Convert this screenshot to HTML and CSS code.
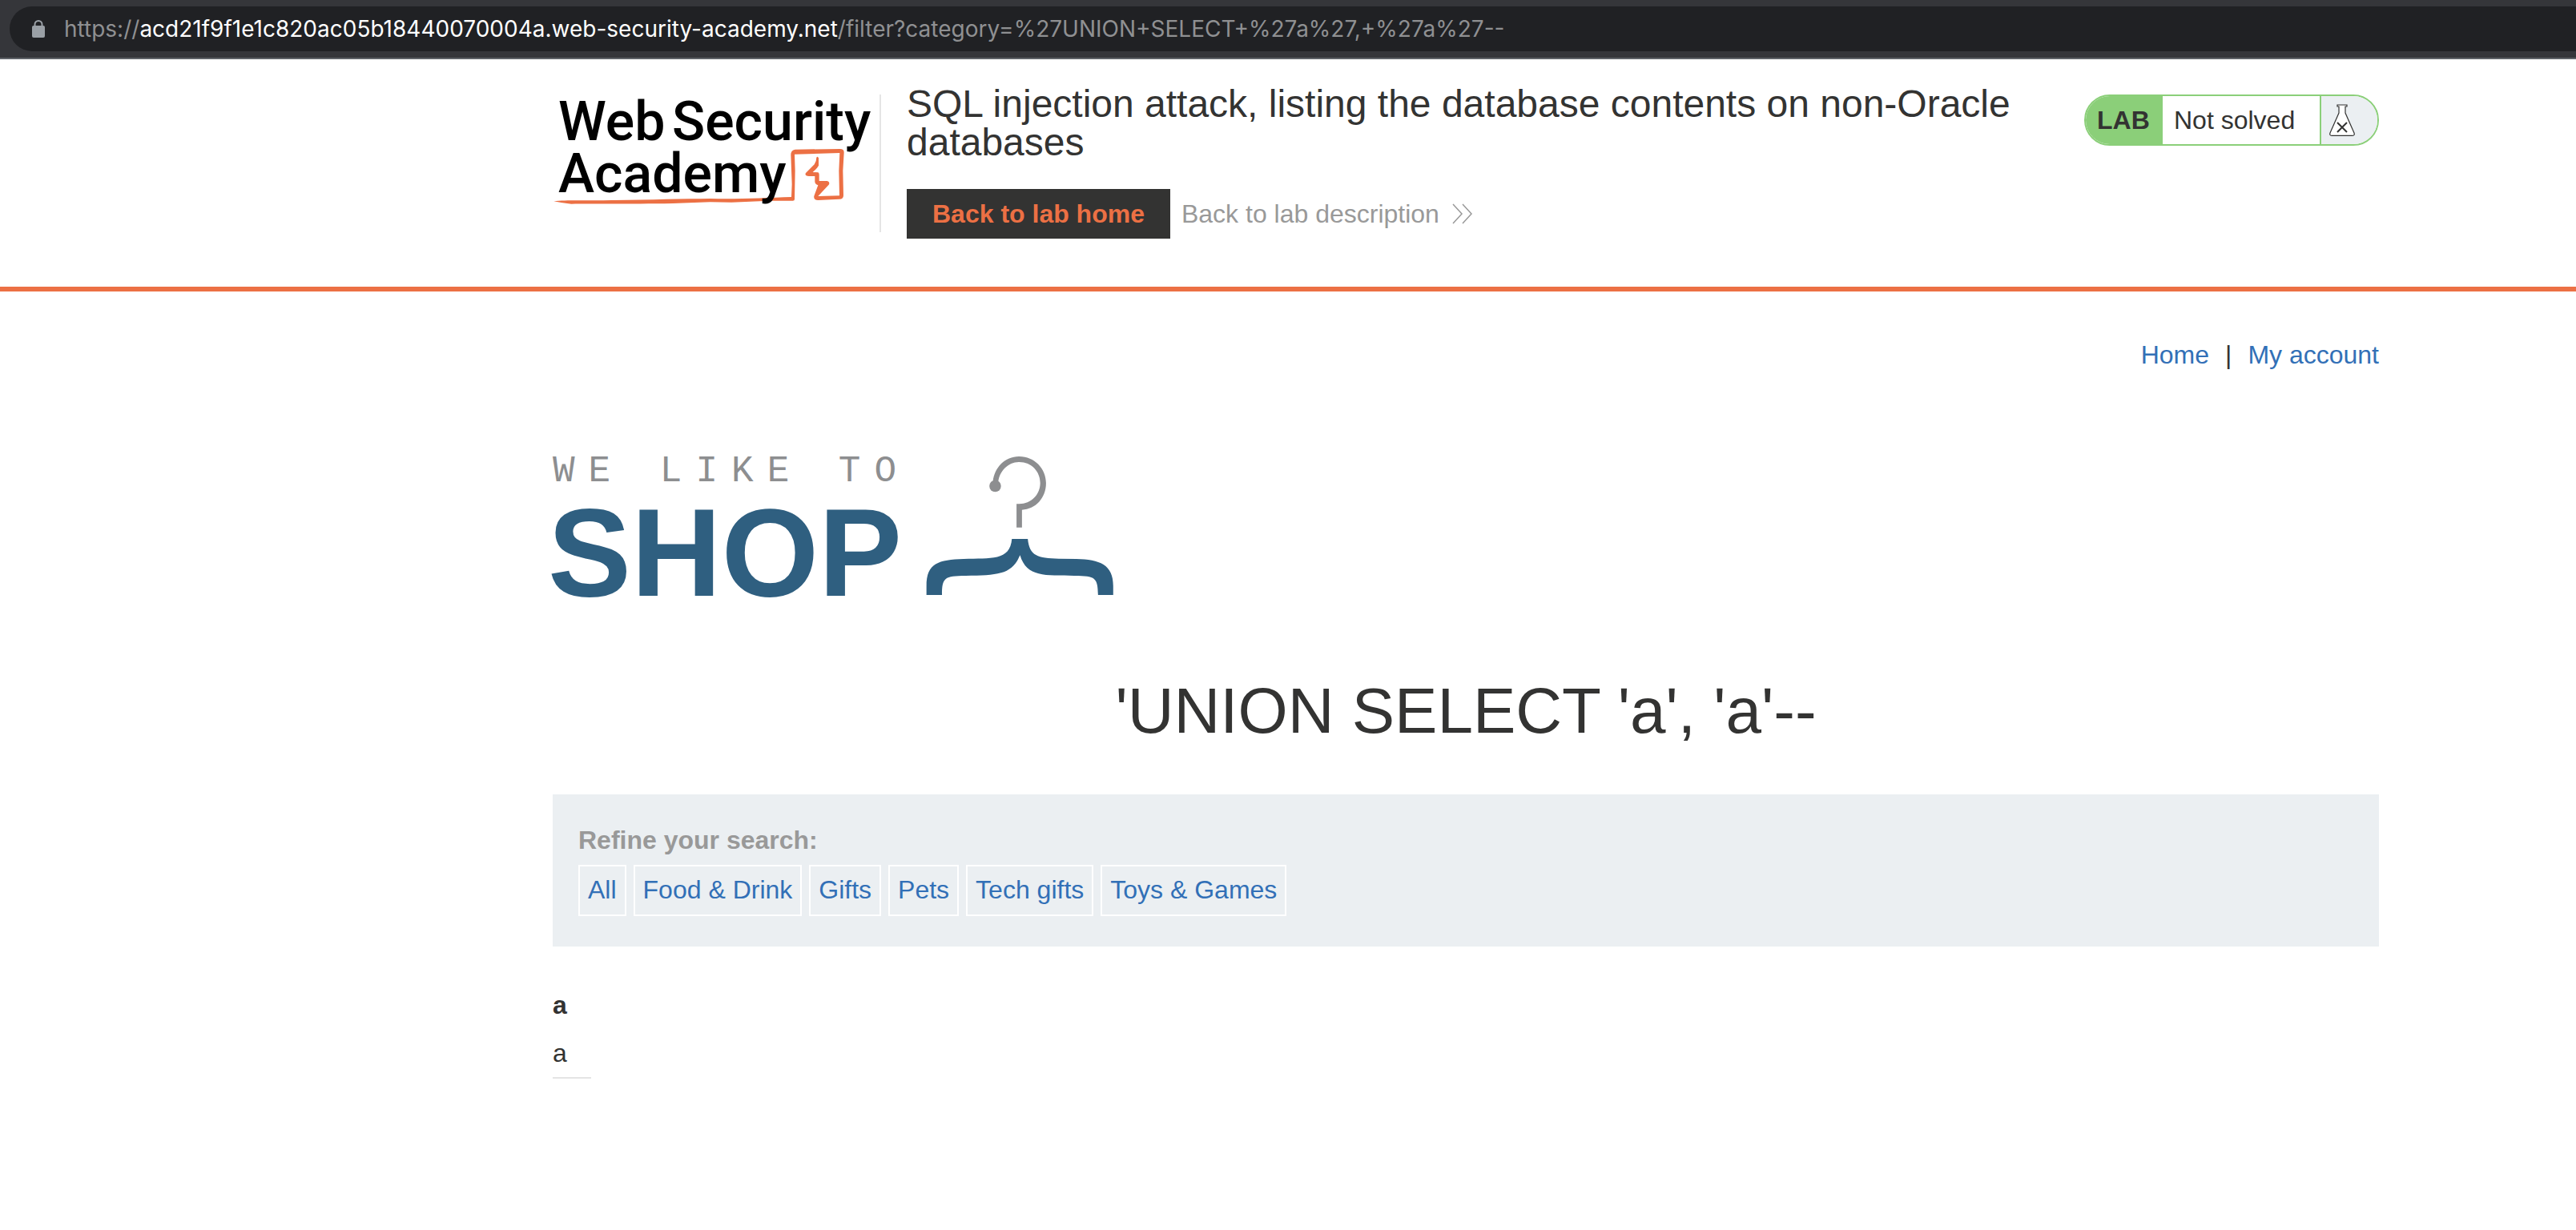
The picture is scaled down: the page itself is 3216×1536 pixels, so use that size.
FILE: index.html
```html
<!DOCTYPE html>
<html lang="en">
<head>
<meta charset="utf-8">
<title>SQL injection attack, listing the database contents on non-Oracle databases</title>
<link rel="stylesheet" href="styles.css">
</head>
<body>
<div class="toolbar">
  <div class="address">
    <svg class="lock" viewBox="0 0 16 22" aria-hidden="true"><path d="M3.500 9V5.500a4.500 4.500 0 0 1 9 0V9" fill="none" stroke="#9aa0a6" stroke-width="2"/><rect y="7" width="16" height="15" rx="2" fill="#9aa0a6"/></svg>
    <span class="url">https://<span class="host">acd21f9f1e1c820ac05b18440070004a.web-security-academy.net</span>/filter?category=%27UNION+SELECT+%27a%27,+%27a%27--</span>
  </div>
</div>

<header class="lab-header">
  <a class="academy" href="#" aria-label="Web Security Academy">
    <svg class="academy-logo" viewBox="0 0 408 172">
      <g transform="translate(-10 -28) scale(.33333)" fill="#ec7044">
        <path d="M34 484C80 478 160 482 260 480C400 478 520 475 620 474C720 477 830 471 924 468L926 420L922 310Q922 292 938 290L1106 288Q1122 288 1121 302L1117 370L1119 462Q1119 476 1104 476L1024 480Q1006 480 1009 464L1024 424Q1012 420 1012 410L1012 390L990 390Q972 388 978 378L1010 346Q1018 334 1018 320Q1022 314 1026 322L1026 350Q1024 356 1004 375L1024 376Q1028 378 1028 384L1028 408L1058 408Q1070 412 1064 422L1024 465L1104 463L1102 370L1105 303L936 308L938 370L936 476Q936 484 926 482L840 482L700 488L620 487L480 492C330 494 180 494 100 494Q70 492 34 484Z"/>
      </g>
      <text class="academy-word" x="7" y="57">Web</text>
      <text class="academy-word" x="149" y="57">Security</text>
      <text class="academy-word" x="7" y="122">Academy</text>
    </svg>
  </a>
  <div class="lab-title">
    <h2>SQL injection attack, listing the database contents on non-Oracle databases</h2>
    <div class="lab-actions">
      <a class="lab-home" href="#">Back to lab home</a>
      <a class="lab-description" href="#">Back to lab description
        <svg class="chevrons" viewBox="0 0 26 26" aria-hidden="true"><path d="M1 1L12 13L1 25M13 1L24 13L13 25" fill="none" stroke="#999" stroke-width="1.500"/></svg>
      </a>
    </div>
  </div>
  <div class="status">
    <span class="status-lab">LAB</span>
    <span class="status-text">Not solved</span>
    <span class="status-icon">
      <svg class="flask" viewBox="0 0 32 40" aria-hidden="true"><path d="M10 1H22V3H20V11L31 36Q32 39.300 29 39.300H3Q0 39.300 1 36L12 11V3H10Z" fill="#fff" stroke="#333332" stroke-width="1.200"/><path d="M10 23L22 35M22 23L10 35" stroke="#333332" stroke-width="2"/></svg>
    </span>
  </div>
</header>

<main class="page">
  <nav class="links">
    <a href="#">Home</a><span>|</span><a href="#">My account</a>
  </nav>
  <svg class="shop-logo" viewBox="0 0 710 200" role="img" aria-label="We like to shop">
    <text class="shop-small" x="0" y="41">WE LIKE TO</text>
    <text class="shop-big" x="-6" y="184">SHOP</text>
    <g transform="translate(-20 -20) scale(.4847 .33333)">
      <path d="M1175 185C1179 130 1207 90 1243 90C1282 90 1312 135 1312 190C1312 246 1285 288 1250 290V356H1236V268H1243C1274 268 1297 232 1297 190C1297 147 1275 111 1243 111C1214 111 1192 145 1189 185Z" fill="#8d8e90"/>
      <ellipse cx="1181" cy="201" rx="15" ry="22" fill="#8d8e90"/>
      <path d="M1224 399H1265C1269 462 1291 472 1345 473L1390 474C1450 476 1485 495 1485 575V609H1446C1445 545 1440 537 1385 537C1310 535 1262 544 1245 460C1224 532 1190 535 1105 537C1050 537 1044 545 1044 609H1004V575C1004 490 1035 477 1100 474C1170 470 1219 482 1224 399Z" fill="#2f5f80"/>
    </g>
  </svg>
  <h1>'UNION SELECT 'a', 'a'--</h1>
  <section class="filters">
    <p>Refine your search:</p>
    <div class="filter-list">
      <a href="#">All</a>
      <a href="#">Food &amp; Drink</a>
      <a href="#">Gifts</a>
      <a href="#">Pets</a>
      <a href="#">Tech gifts</a>
      <a href="#">Toys &amp; Games</a>
    </div>
  </section>
  <table class="results">
    <tbody>
      <tr><th>a</th></tr>
      <tr><td>a</td></tr>
    </tbody>
  </table>
</main>
</body>
</html>
```
FILE: styles.css
```css
* {
  box-sizing: border-box;
}

body {
  margin: 0;
  background: #fff;
  color: #333332;
  font: 32px/36px "Liberation Sans", Arial, sans-serif;
}

a {
  color: #3270b7;
  text-decoration: none;
}

h1,
h2,
p {
  margin: 0;
}

/* Browser address bar */
.toolbar {
  padding: 8px 0 8px 12px;
  background: #35363a;
  border-bottom: 2px solid #5f6368;
}

.address {
  display: flex;
  align-items: center;
  gap: 24px;
  height: 56px;
  padding-left: 28px;
  background: #202124;
  border-radius: 28px 0 0 28px;
}

.lock {
  width: 16px;
  height: 22px;
}

.url {
  color: #8f9092;
  font: 28px/36px Inter, sans-serif;
  white-space: nowrap;
}

.host {
  color: #fff;
}

/* Lab banner */
.lab-header {
  display: flex;
  align-items: flex-start;
  padding: 32px 246px 60px 690px;
  border-bottom: 6px solid #ec7044;
}

.academy {
  display: block;
  flex: none;
  margin-top: 12px;
  border-right: 2px solid #e5e5e5;
}

.academy-logo {
  display: block;
  width: 408px;
  height: 172px;
  overflow: visible;
}

.academy-word {
  fill: #000;
  font: 500 68px Roboto, sans-serif;
}

.lab-title {
  flex: 1;
  padding-left: 32px;
}

.lab-title h2 {
  font-size: 48px;
  font-weight: 400;
  line-height: 48px;
}

.lab-actions {
  display: flex;
  align-items: center;
  gap: 14px;
  margin-top: 34px;
}

.lab-home {
  padding: 13px 32px;
  background: #333332;
  color: #ec7044;
  font-weight: 700;
}

.lab-description {
  display: flex;
  align-items: center;
  gap: 16px;
  color: #999;
}

.chevrons {
  width: 26px;
  height: 26px;
}

.status {
  display: flex;
  flex: none;
  width: 368px;
  margin-top: 12px;
  overflow: hidden;
  border: 2px solid #8bcf79;
  border-radius: 32px;
  line-height: 60px;
}

.status-lab {
  width: 96px;
  padding-left: 14px;
  background: #8bcf79;
  font-weight: 700;
}

.status-text {
  flex: 1;
  padding-left: 14px;
}

.status-icon {
  display: flex;
  align-items: center;
  width: 72px;
  padding-left: 10px;
  background: #ebeff2;
  border-left: 2px solid #8bcf79;
}

.flask {
  width: 32px;
  height: 40px;
}

/* Shop page */
.page {
  padding: 61px 246px 60px 690px;
}

.links {
  display: flex;
  justify-content: flex-end;
  gap: 20px;
}

.shop-logo {
  display: block;
  width: 710px;
  height: 200px;
  margin-top: 99px;
  overflow: visible;
}

.shop-small {
  fill: #8d8e90;
  font: 46px "Liberation Mono", "Courier New", monospace;
  letter-spacing: 17px;
}

.shop-big {
  fill: #2f5f80;
  font: 700 156px "Liberation Sans", Arial, sans-serif;
}

h1 {
  margin-top: 82px;
  font-size: 80px;
  font-weight: 400;
  line-height: 92px;
  text-align: center;
}

.filters {
  margin-top: 58px;
  padding: 39px 32px 38px;
  background: #ebeff2;
}

.filters p {
  color: #999;
  font-weight: 700;
}

.filter-list {
  display: flex;
  flex-wrap: wrap;
  gap: 9px;
  margin-top: 13px;
}

.filter-list a {
  padding: 0 10px 2px;
  border: 2px solid #fff;
  line-height: 58px;
}

.results {
  margin-top: 43px;
  border-collapse: collapse;
  line-height: 60px;
  text-align: left;
}

.results th,
.results td {
  padding: 0 30px 0 0;
}

.results td {
  border-bottom: 2px solid #e5e5e5;
}
```
